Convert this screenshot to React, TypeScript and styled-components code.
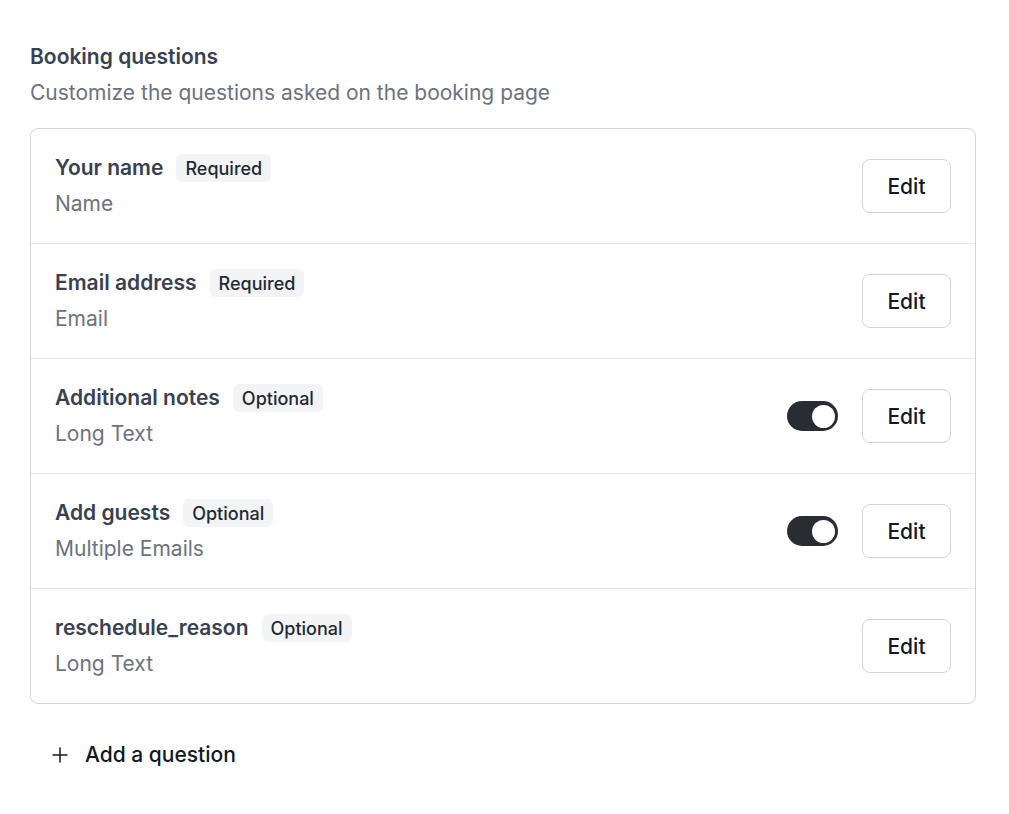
import React from 'react';
import styled, { createGlobalStyle } from 'styled-components';

const GlobalStyle = createGlobalStyle`
  * { box-sizing: border-box; }
  body {
    margin: 0;
    background: #ffffff;
    font-family: Inter, "Noto Sans", sans-serif;
  }
`;

const Page = styled.div`
  padding: 44px 33px 40px 30px;
  width: 1009px;
`;

const Header = styled.div`
  display: flex;
  flex-direction: column;
  gap: 9px;
  margin-bottom: 21px;
`;

const Title = styled.h2`
  margin: 0;
  font-size: 21px;
  font-weight: 600;
  line-height: 26px;
  color: #374151;
`;

const Subtitle = styled.p`
  margin: 0;
  font-size: 21px;
  line-height: 28px;
  color: #6b7280;
`;

const Card = styled.div`
  border: 1px solid #d1d5db;
  border-radius: 8px;
  overflow: hidden;
`;

const Row = styled.div`
  display: flex;
  align-items: center;
  justify-content: space-between;
  height: 115px;
  padding: 0 24px;
  border-top: 1px solid #e5e7eb;

  &:first-child {
    border-top: none;
    height: 114px;
  }
`;

const Info = styled.div`
  display: flex;
  flex-direction: column;
  gap: 8px;
`;

const LabelLine = styled.div`
  display: flex;
  align-items: center;
  gap: 13px;
`;

const Label = styled.span`
  font-size: 21px;
  font-weight: 600;
  color: #374151;
  line-height: 28px;
`;

const Badge = styled.span`
  background: #f3f4f6;
  color: #1f2937;
  border-radius: 6px;
  padding: 0 9px;
  height: 28px;
  display: inline-flex;
  align-items: center;
  font-size: 18px;
  font-weight: 500;
`;

const TypeText = styled.span`
  font-size: 21px;
  color: #6b7280;
  line-height: 28px;
`;

const Actions = styled.div`
  display: flex;
  align-items: center;
  gap: 24px;
`;

const Toggle = styled.button<{ $on: boolean }>`
  position: relative;
  width: 51px;
  height: 30px;
  border: none;
  border-radius: 15px;
  padding: 0;
  cursor: pointer;
  background: ${(p) => (p.$on ? '#292d33' : '#e5e7eb')};

  &::after {
    content: '';
    position: absolute;
    top: 3.5px;
    left: ${(p) => (p.$on ? '25px' : '3px')};
    width: 23px;
    height: 23px;
    border-radius: 50%;
    background: #ffffff;
  }
`;

const EditButton = styled.button`
  width: 89px;
  height: 54px;
  border: 1px solid #d1d5db;
  border-radius: 8px;
  background: #ffffff;
  font-family: inherit;
  font-size: 21px;
  font-weight: 500;
  color: #111827;
  cursor: pointer;
`;

const AddButton = styled.button`
  display: flex;
  align-items: center;
  gap: 17px;
  margin-top: 28px;
  padding: 10px 20px 10px 22px;
  border: none;
  background: transparent;
  font-family: inherit;
  font-size: 21px;
  font-weight: 500;
  color: #111827;
  cursor: pointer;
`;

type Question = {
  label: string;
  type: string;
  required: boolean;
  toggle?: boolean;
};

const questions: Question[] = [
  { label: 'Your name', type: 'Name', required: true },
  { label: 'Email address', type: 'Email', required: true },
  { label: 'Additional notes', type: 'Long Text', required: false, toggle: true },
  { label: 'Add guests', type: 'Multiple Emails', required: false, toggle: true },
  { label: 'reschedule_reason', type: 'Long Text', required: false },
];

export default function App() {
  return (
    <>
      <GlobalStyle />
      <Page>
        <Header>
          <Title>Booking questions</Title>
          <Subtitle>Customize the questions asked on the booking page</Subtitle>
        </Header>
        <Card>
          {questions.map((q) => (
            <Row key={q.label}>
              <Info>
                <LabelLine>
                  <Label>{q.label}</Label>
                  <Badge>{q.required ? 'Required' : 'Optional'}</Badge>
                </LabelLine>
                <TypeText>{q.type}</TypeText>
              </Info>
              <Actions>
                {q.toggle && <Toggle $on aria-label="toggle" />}
                <EditButton>Edit</EditButton>
              </Actions>
            </Row>
          ))}
        </Card>
        <AddButton>
          <svg width="16" height="16" viewBox="0 0 16 16" fill="none" stroke="#111827" strokeWidth="1.5" strokeLinecap="round">
            <path d="M8 1v14M1 8h14" />
          </svg>
          Add a question
        </AddButton>
      </Page>
    </>
  );
}
